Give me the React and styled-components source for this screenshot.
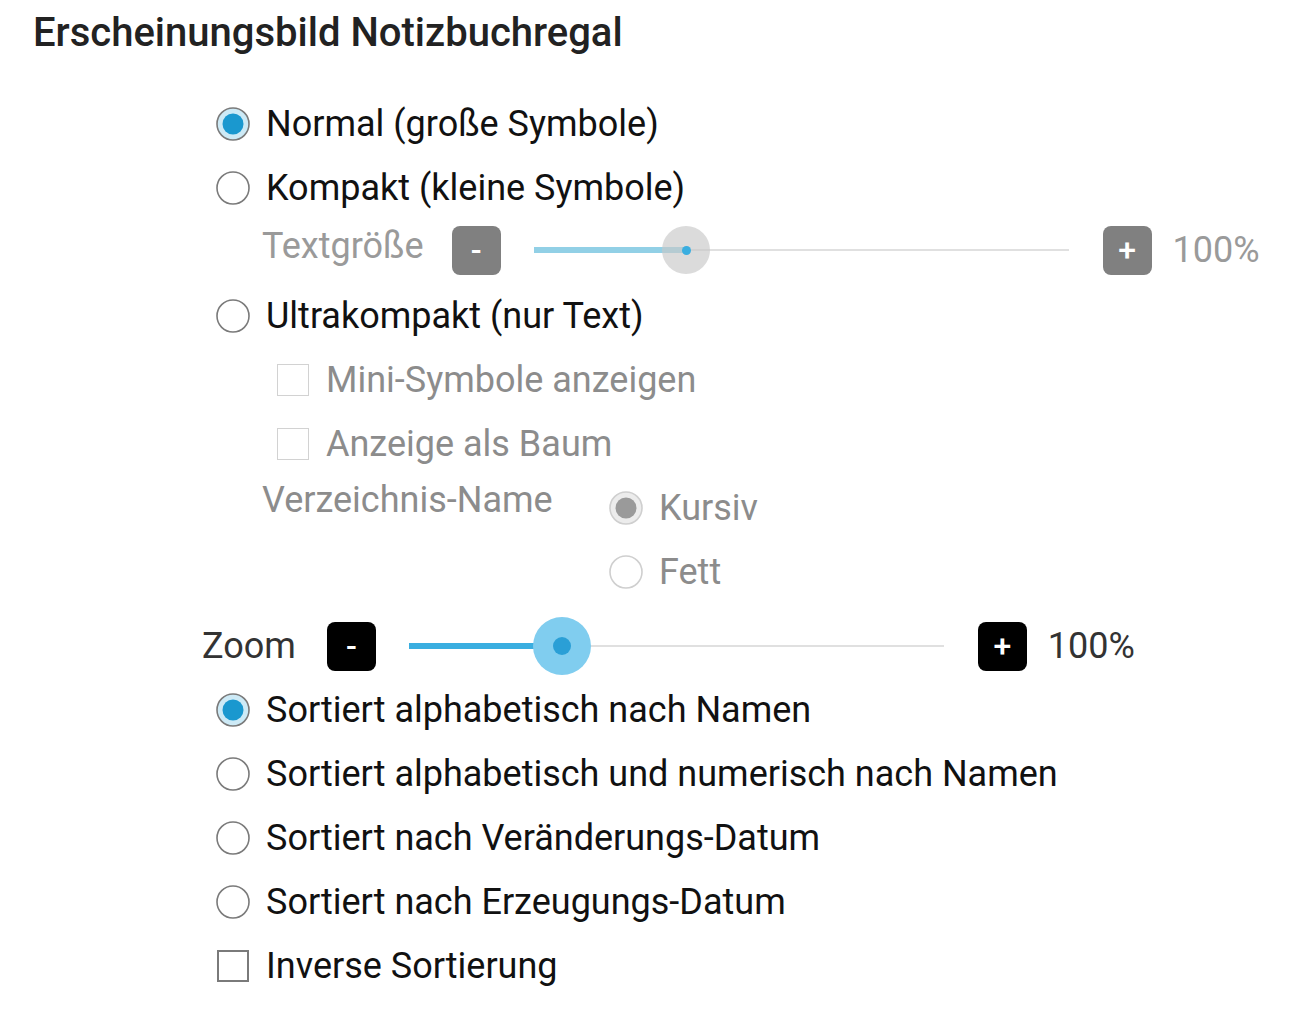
import styled, { createGlobalStyle } from "styled-components";

const GlobalStyle = createGlobalStyle`
  body {
    margin: 0;
    background: #fff;
    font-family: Roboto, "Noto Sans", "Liberation Sans", sans-serif;
  }
`;

function Radio({ checked, disabled }) {
  const ring = disabled ? "#cfcfcf" : "#7a7a7a";
  const fill = disabled ? "#9a9a9a" : "#1a98cf";
  const halo = disabled ? "#ececec" : "#cdeaf6";
  return (
    <RadioBox>
      <svg width="36" height="36" viewBox="0 0 36 36">
        <circle cx="18" cy="18" r="16" fill={checked ? halo : "#fff"} stroke={ring} strokeWidth="1.6" />
        {checked && <circle cx="18" cy="18" r="10.5" fill={fill} />}
      </svg>
    </RadioBox>
  );
}

function Slider({ value, disabled }) {
  return (
    <Track>
      <Rail />
      <Fill $value={value} $disabled={disabled} />
      <Thumb $value={value} $disabled={disabled}>
        <Dot $disabled={disabled} />
      </Thumb>
    </Track>
  );
}

function SliderRow({ label, disabled, value }) {
  return (
    <SliderLine $disabled={disabled}>
      <SliderLabel $disabled={disabled}>{label}</SliderLabel>
      <StepButton $disabled={disabled}>-</StepButton>
      <Slider value={value} disabled={disabled} />
      <StepButton $disabled={disabled}>+</StepButton>
      <Percent $disabled={disabled}>100%</Percent>
    </SliderLine>
  );
}

function App() {
  return (
    <Page>
      <GlobalStyle />
      <Title>Erscheinungsbild Notizbuchregal</Title>
      <Options>
        <Row $indent={14}>
          <Radio checked />
          <Label>Normal (große Symbole)</Label>
        </Row>
        <Row $indent={14}>
          <Radio />
          <Label>Kompakt (kleine Symbole)</Label>
        </Row>
        <SliderRow label="Textgröße" disabled value={28.5} />
        <Row $indent={14}>
          <Radio />
          <Label>Ultrakompakt (nur Text)</Label>
        </Row>
        <Row $indent={75}>
          <Check $disabled />
          <Label $disabled>Mini-Symbole anzeigen</Label>
        </Row>
        <Row $indent={75}>
          <Check $disabled />
          <Label $disabled>Anzeige als Baum</Label>
        </Row>
        <DirGroup>
          <DirLabel>Verzeichnis-Name</DirLabel>
          <DirChoices>
            <Row>
              <Radio checked disabled />
              <Label $disabled>Kursiv</Label>
            </Row>
            <Row>
              <Radio disabled />
              <Label $disabled>Fett</Label>
            </Row>
          </DirChoices>
        </DirGroup>
        <SliderRow label="Zoom" value={28.6} />
        <Row $indent={14}>
          <Radio checked />
          <Label>Sortiert alphabetisch nach Namen</Label>
        </Row>
        <Row $indent={14}>
          <Radio />
          <Label>Sortiert alphabetisch und numerisch nach Namen</Label>
        </Row>
        <Row $indent={14}>
          <Radio />
          <Label>Sortiert nach Veränderungs-Datum</Label>
        </Row>
        <Row $indent={14}>
          <Radio />
          <Label>Sortiert nach Erzeugungs-Datum</Label>
        </Row>
        <Row $indent={15}>
          <Check />
          <Label>Inverse Sortierung</Label>
        </Row>
      </Options>
    </Page>
  );
}

export default App;

const Page = styled.main`
  width: 1292px;
  min-height: 1014px;
  background: #fff;
  overflow: hidden;
`;

const Title = styled.h1`
  margin: 0;
  padding: 11px 0 0 33px;
  height: 92px;
  box-sizing: border-box;
  font-size: 40px;
  line-height: 44px;
  font-weight: 500;
  color: #222;
`;

const Options = styled.section`
  padding-left: 202px;
  display: flex;
  flex-direction: column;
`;

const Row = styled.div`
  display: flex;
  align-items: center;
  height: 64px;
  padding-left: ${(p) => p.$indent || 0}px;
`;

const SliderLine = styled.div`
  display: flex;
  align-items: center;
  height: 64px;
  padding-left: ${(p) => (p.$disabled ? 60 : 0)}px;
  margin: ${(p) => (p.$disabled ? "-2px 0 2px" : "10px 0 0")};
`;

const RadioBox = styled.span`
  display: flex;
  width: 36px;
  height: 36px;
  margin-left: -1px;
  margin-right: 15px;
`;

const Label = styled.span`
  font-size: 36px;
  color: ${(p) => (p.$disabled ? "#8c8c8c" : "#111")};
  white-space: nowrap;
`;

const Check = styled.span`
  width: 32px;
  height: 32px;
  box-sizing: border-box;
  border: ${(p) => (p.$disabled ? "1.5px solid #d2d2d2" : "2px solid #7a7a7a")};
  margin-right: 17px;
  flex-shrink: 0;
`;

const SliderLabel = styled.span`
  font-size: 36px;
  color: ${(p) => (p.$disabled ? "#9a9a9a" : "#333")};
  margin-right: ${(p) => (p.$disabled ? 28 : 31)}px;
  margin-top: ${(p) => (p.$disabled ? "-8px" : "0")};
  white-space: nowrap;
`;

const StepButton = styled.span`
  width: 49px;
  height: 49px;
  border-radius: 8px;
  background: ${(p) => (p.$disabled ? "#808080" : "#000")};
  color: #fff;
  display: flex;
  align-items: center;
  justify-content: center;
  font-size: 32px;
  font-weight: 500;
  line-height: 1;
`;

const Track = styled.div`
  position: relative;
  width: 535px;
  height: 60px;
  margin: 0 34px 0 33px;
`;

const Rail = styled.div`
  position: absolute;
  left: 0;
  right: 0;
  top: 29px;
  height: 2px;
  background: #e0e0e0;
`;

const Fill = styled.div`
  position: absolute;
  left: 0;
  top: 27px;
  height: 6px;
  width: ${(p) => p.$value}%;
  background: ${(p) => (p.$disabled ? "#92d0e6" : "#3aaee0")};
`;

const Thumb = styled.div`
  position: absolute;
  top: 30px;
  left: ${(p) => p.$value}%;
  width: ${(p) => (p.$disabled ? 48 : 58)}px;
  height: ${(p) => (p.$disabled ? 48 : 58)}px;
  border-radius: 50%;
  transform: translate(-50%, -50%);
  background: ${(p) => (p.$disabled ? "rgba(200,200,200,0.65)" : "#80cdef")};
  display: flex;
  align-items: center;
  justify-content: center;
`;

const Dot = styled.div`
  width: ${(p) => (p.$disabled ? 9 : 18)}px;
  height: ${(p) => (p.$disabled ? 9 : 18)}px;
  border-radius: 50%;
  background: ${(p) => (p.$disabled ? "#3aaee0" : "#2a9fd6")};
`;

const Percent = styled.span`
  margin-left: 21px;
  font-size: 36px;
  color: ${(p) => (p.$disabled ? "#9a9a9a" : "#333")};
`;

const DirGroup = styled.div`
  display: flex;
  padding-left: 60px;
`;

const DirLabel = styled.span`
  width: 347px;
  font-size: 36px;
  line-height: 48px;
  color: #8c8c8c;
  white-space: nowrap;
`;

const DirChoices = styled.div`
  display: flex;
  flex-direction: column;
`;
